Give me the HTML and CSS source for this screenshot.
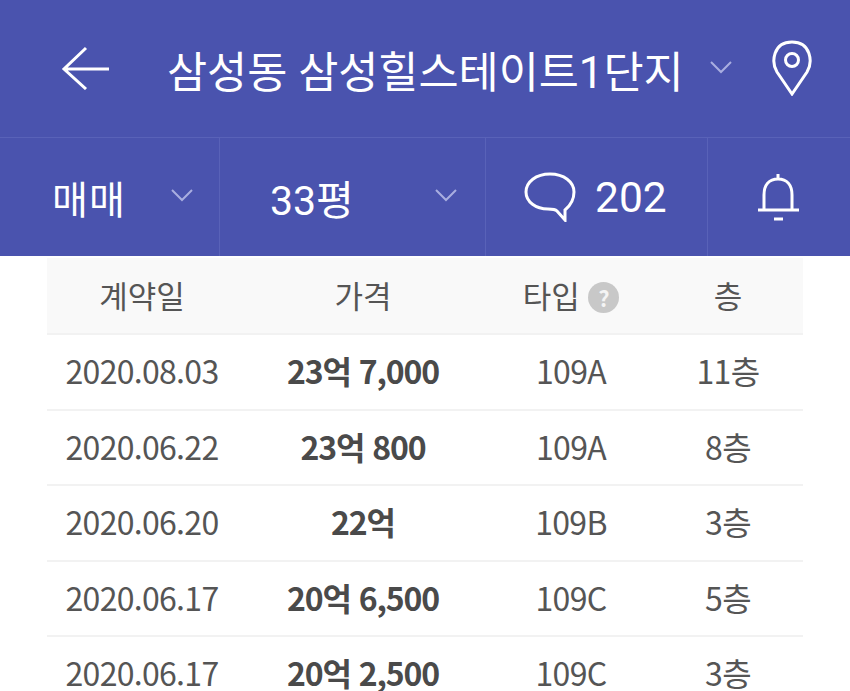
FILE: index.html
```html
<!DOCTYPE html>
<html lang="ko">
  <head>
    <meta charset="UTF-8" />
    <meta name="viewport" content="width=device-width, initial-scale=1.0" />
    <title>삼성힐스테이트1단지</title>
    <link rel="stylesheet" href="styles.css">
  </head>
  <body>
    <header class="topbar">
      <svg class="back-icon" width="50" height="44" viewBox="0 0 50 44">
        <path d="M25 2 L3 23 L25 43 M3 23 H48" />
      </svg>
      <h1 class="title">삼성동 삼성힐스테이트1단지</h1>
      <svg class="chevron title-chevron" width="24" height="14" viewBox="0 0 24 14">
        <path d="M2 2 L12 12 L22 2" />
      </svg>
      <svg class="pin-icon" width="42" height="56" viewBox="0 0 42 56">
        <path d="M21 54 L6 32 C0 22 2 2 21 2 C40 2 42 22 36 32 Z" />
        <circle cx="21" cy="20" r="6.5" />
      </svg>
    </header>

    <nav class="filters">
      <div class="filter filter-type">
        <span class="filter-label label-wide">매매</span>
        <svg class="chevron" width="24" height="14" viewBox="0 0 24 14">
          <path d="M2 2 L12 12 L22 2" />
        </svg>
      </div>
      <div class="filter filter-size">
        <span class="filter-label">33평</span>
        <svg class="chevron" width="24" height="14" viewBox="0 0 24 14">
          <path d="M2 2 L12 12 L22 2" />
        </svg>
      </div>
      <div class="filter filter-comment">
        <svg class="bubble-icon" width="52" height="50" viewBox="0 0 52 50">
          <path d="M26 2 C12 2 2 10 2 20 C2 30 12 37 24 37 C28 37 31 37 33 39 L41 48 L41 38 C47 33 50 27 50 20 C50 10 40 2 26 2 Z" />
        </svg>
        <span class="filter-label">202</span>
      </div>
      <div class="filter filter-bell">
        <svg class="bell-icon" width="44" height="50" viewBox="0 0 44 50">
          <path d="M2 38 H43 M8 38 V23 C8 13 13 7 22 7 C31 7 36 13 36 23 V38 M22 2 V7 M18 47 H27" />
        </svg>
      </div>
    </nav>

    <table class="deals">
      <colgroup>
        <col class="col-date" />
        <col class="col-price" />
        <col class="col-type" />
        <col class="col-floor" />
      </colgroup>
      <thead>
        <tr>
          <th>계약일</th>
          <th>가격</th>
          <th>타입 <span class="help">?</span></th>
          <th>층</th>
        </tr>
      </thead>
      <tbody>
        <tr>
          <td>2020.08.03</td>
          <td class="price">23억 7,000</td>
          <td>109A</td>
          <td>11층</td>
        </tr>
        <tr>
          <td>2020.06.22</td>
          <td class="price">23억 800</td>
          <td>109A</td>
          <td>8층</td>
        </tr>
        <tr>
          <td>2020.06.20</td>
          <td class="price">22억</td>
          <td>109B</td>
          <td>3층</td>
        </tr>
        <tr>
          <td>2020.06.17</td>
          <td class="price">20억 6,500</td>
          <td>109C</td>
          <td>5층</td>
        </tr>
        <tr>
          <td>2020.06.17</td>
          <td class="price">20억 2,500</td>
          <td>109C</td>
          <td>3층</td>
        </tr>
      </tbody>
    </table>
  </body>
</html>
```

FILE: styles.css
```css
html,
body {
  height: 100%;
  overflow: hidden;
}
body {
  margin: 0;
  background-color: #fff;
  font-family: "Noto Sans CJK KR", "Noto Sans", sans-serif;
}
svg {
  display: block;
  fill: none;
  stroke: #fff;
  stroke-width: 3;
}
.topbar {
  display: flex;
  align-items: center;
  height: 137px;
  padding-left: 61px;
  background-color: #4a53ae;
  border-bottom: 1px solid #5962b8;
  color: #fff;
}
.back-icon {
  margin-top: -2px;
}
.title {
  margin: 0 0 0 56px;
  font-family: Roboto, "Noto Sans CJK KR", sans-serif;
  font-size: 43.6px;
  font-weight: 400;
  white-space: nowrap;
}
.title-chevron {
  margin-left: 25px;
  margin-top: -4px;
}
.pin-icon {
  margin-left: 38px;
  margin-top: -2px;
}
.filters {
  display: flex;
  height: 118px;
  background-color: #4a53ae;
  color: #fff;
}
.filter {
  display: flex;
  align-items: center;
  box-sizing: border-box;
  border-right: 1px solid #5962b8;
}
.filter-type {
  width: 220px;
  padding-left: 52px;
}
.filter-type .chevron {
  margin-left: 44px;
  margin-top: -4px;
}
.filter-size {
  width: 266px;
  padding-left: 50px;
}
.filter-size .chevron {
  margin-left: 80px;
  margin-top: -4px;
}
.filter-comment {
  width: 222px;
  padding-left: 38px;
}
.filter-comment .filter-label {
  margin-left: 19px;
  font-size: 42.5px;
}
.filter-bell {
  flex: 1;
  padding-left: 48px;
  border-right: 0;
}
.filter-label {
  font-family: Roboto, "Noto Sans CJK KR", sans-serif;
  font-size: 41px;
}
.label-wide {
  font-size: 39px;
  letter-spacing: 1px;
}
.chevron {
  stroke: #a9aee0;
  stroke-width: 2;
}
.deals {
  width: 756px;
  margin: 2px 0 0 47px;
  border-collapse: collapse;
  table-layout: fixed;
  color: #555;
  font-size: 32px;
  text-align: center;
}
.col-date {
  width: 190px;
}
.col-price {
  width: 252px;
}
.col-type {
  width: 164px;
}
.col-floor {
  width: 150px;
}
.deals th {
  height: 72px;
  padding: 0 0 3px;
  background-color: #f9f9f9;
  border-bottom: 2px solid #f2f2f2;
  font-size: 31px;
  font-weight: 400;
}
.deals td {
  height: 70px;
  padding: 0 0 4px;
  border-bottom: 2px solid #f2f2f2;
  letter-spacing: -0.7px;
}
.deals tr:nth-child(even) td {
  height: 69px;
}
.deals .price {
  font-weight: 700;
  letter-spacing: -1.1px;
  color: #4a4a4a;
}
.help {
  display: inline-block;
  width: 31px;
  height: 31px;
  border-radius: 50%;
  background-color: #c8c8c8;
  color: #f4f4f4;
  font-size: 22px;
  font-weight: 700;
  line-height: 31px;
  vertical-align: 1px;
}
```
